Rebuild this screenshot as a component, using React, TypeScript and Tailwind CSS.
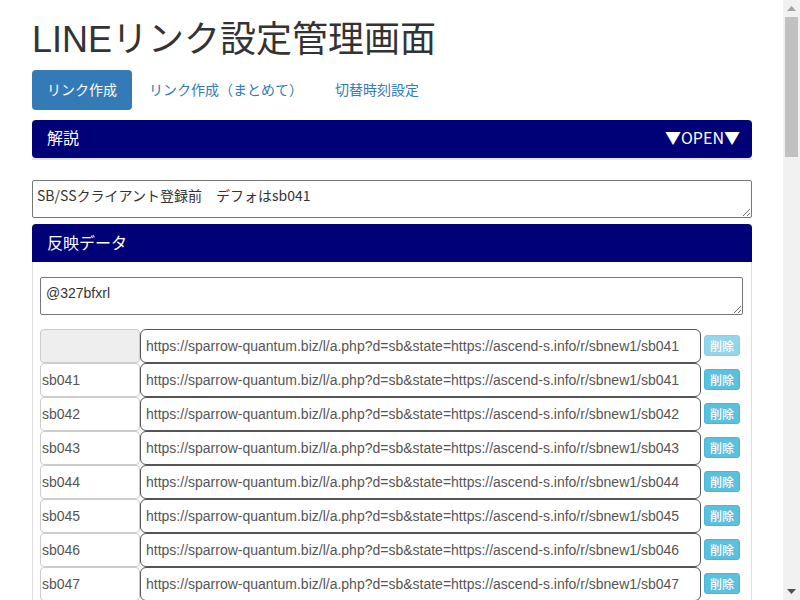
import React from "react";

const FONT = '"Liberation Sans", "Noto Sans CJK JP", Arial, sans-serif';
const JP = '"Noto Sans CJK JP", "Liberation Sans", sans-serif';

const rows = ["", "sb041", "sb042", "sb043", "sb044", "sb045", "sb046", "sb047"];

function urlFor(i: number, code: string) {
  const c = i === 0 ? "sb041" : code;
  return `https://sparrow-quantum.biz/l/a.php?d=sb&state=https://ascend-s.info/r/sbnew1/${c}`;
}

export default function App() {
  return (
    <div className="flex h-[600px] w-[800px] overflow-hidden bg-white text-[#333]" style={{ fontFamily: FONT }}>
      <div className="h-full w-[783px] overflow-hidden">
        <div className="ml-[32px] w-[720px]">
          <h1 className="mt-[20px] mb-[10px] text-[36px] font-normal leading-[1.1] text-[#333]">
            LINEリンク設定管理画面
          </h1>
          <div className="flex text-[14px] leading-[20px]">
            <div className="rounded-[4px] bg-[#337ab7] px-[15px] py-[10px] text-white">リンク作成</div>
            <div className="ml-[2px] px-[15px] py-[10px] text-[#337ab7]">リンク作成（まとめて）</div>
            <div className="ml-[2px] px-[15px] py-[10px] text-[#337ab7]">切替時刻設定</div>
          </div>

          <div className="mt-[10px]">
            <div
              className="flex h-[38px] items-center justify-between rounded-[4px] bg-[#000077] pb-[3px] pl-[15px] pr-[12px] text-[16px] text-white"
              style={{ fontFamily: JP }}
            >
              <span>解説</span>
              <span>▼OPEN▼</span>
            </div>
            <div className="h-[2px] bg-[#e4e4e4]" />
          </div>

          <textarea
            readOnly
            defaultValue={"SB/SSクライアント登録前　デフォはsb041"}
            className="mt-[20px] block h-[38px] w-[720px] rounded-[2px] border border-[#767676] px-[4px] pt-[4px] text-[14px] leading-[20px] text-[#333] outline-none"
            style={{ fontFamily: JP }}
          />

          <div className="mt-[6px]">
            <div
              className="flex h-[38px] items-center rounded-t-[4px] bg-[#000077] pb-[2px] px-[15px] text-[16px] text-white"
              style={{ fontFamily: JP }}
            >
              反映データ
            </div>
            <div className="border-x border-[#ddd] pt-[15px] pl-[7px] pr-[8px]">
              <textarea
                readOnly
                defaultValue="@327bfxrl"
                className="block h-[38px] w-[703px] rounded-[2px] border border-[#767676] px-[5px] pt-[5px] text-[14px] leading-[20px] text-[#333] outline-none"
              />
              <div className="mt-[14px] flex flex-col">
                {rows.map((code, i) => (
                  <div key={i} className="flex h-[34px] items-center">
                    <input
                      readOnly
                      value={code}
                      className={`h-[34px] w-[100px] rounded-[4px] border border-[#ccc] pl-[1px] text-[14px] text-[#555] outline-none ${
                        i === 0 ? "bg-[#eee]" : "bg-white"
                      }`}
                    />
                    <input
                      readOnly
                      value={urlFor(i, code)}
                      className="h-[34px] w-[561px] rounded-[6px] border border-[#555] bg-white px-[5px] text-[14px] text-[#555] outline-none"
                    />
                    <button
                      className={`ml-[3px] flex h-[21px] w-[36px] items-center justify-center rounded-[3px] border border-[#46b8da] bg-[#5bc0de] text-[12px] font-medium leading-[18px] text-white ${
                        i === 0 ? "opacity-65" : ""
                      }`}
                      style={{ fontFamily: JP }}
                    >
                      削除
                    </button>
                  </div>
                ))}
              </div>
            </div>
          </div>
        </div>
      </div>

      <div className="flex h-full w-[17px] flex-col items-center bg-[#f1f1f1]">
        <div className="flex h-[17px] w-full items-center justify-center">
          <svg width="9" height="5" viewBox="0 0 9 5">
            <polygon points="0,5 9,5 4.5,0" fill="#a3a3a3" />
          </svg>
        </div>
        <div className="h-[140px] w-[13px] bg-[#c1c1c1]" />
        <div className="flex-1" />
        <div className="flex h-[17px] w-full items-center justify-center">
          <svg width="9" height="5" viewBox="0 0 9 5">
            <polygon points="0,0 9,0 4.5,5" fill="#505050" />
          </svg>
        </div>
      </div>
    </div>
  );
}
